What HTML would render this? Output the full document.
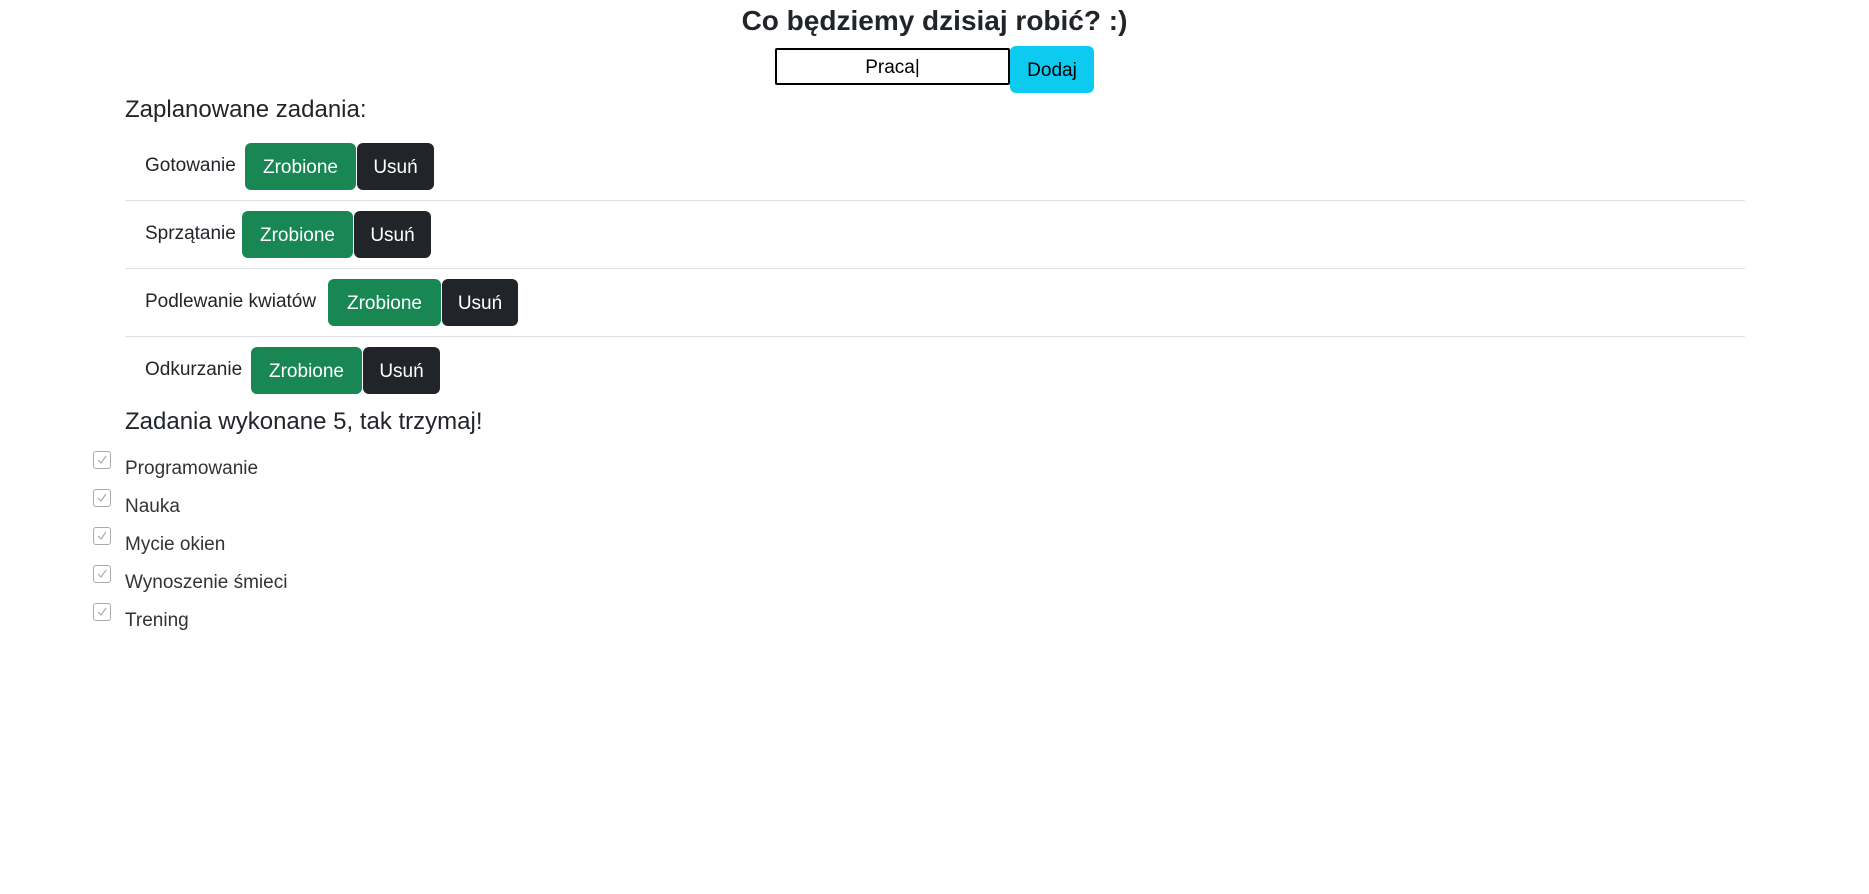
<!DOCTYPE html>
<html><head><meta charset="utf-8"><style>
body{margin:0;width:1869px;height:894px;background:#fff;font-family:"Liberation Sans",sans-serif;color:#212529;position:relative;overflow:hidden}
h1{position:absolute;left:0;width:1869px;text-align:center;top:3px;margin:0;font-size:28px;font-weight:bold;line-height:36px}
.in{position:absolute;left:775px;top:48px;width:231px;height:33px;border:2px solid #000;border-radius:2px;text-align:center;font-size:19px;line-height:35px;color:#000}
.dod{position:absolute;left:1010px;top:46px;width:84px;height:47px;background:#0dcaf0;border-radius:6px;font-size:19px;line-height:50px;text-align:center;color:#000}
h2{position:absolute;margin:0;font-size:24px;font-weight:normal;left:125px;line-height:30px}
.row{position:absolute;left:125px;width:1620px;height:68px;border-bottom:1px solid #dee2e6}
.row span{position:absolute;left:20px;top:23px;font-size:19px;line-height:22px}
.b{position:absolute;top:0;height:47px;line-height:49px;font-size:19px;color:#fff;text-align:center;border-radius:6px}
.g{background:#198754}.d{background:#212529}
.cb{position:absolute;left:93px;width:16px;height:16px;border:1.5px solid #aaa;border-radius:3px}
.cb svg{position:absolute;left:2px;top:2px}
.t{position:absolute;left:125px;font-size:19px;color:#333;line-height:22px}
</style></head><body>
<h1>Co będziemy dzisiaj robić? :)</h1>
<div class="in">Praca|</div>
<div class="dod">Dodaj</div>
<h2 style="top:95px">Zaplanowane zadania:</h2>
<div class="row" style="top:132px"><span>Gotowanie</span><div class="b g" style="left:120px;top:11px;width:111px">Zrobione</div><div class="b d" style="left:232px;top:11px;width:77px">Usuń</div></div>
<div class="row" style="top:200px"><span>Sprzątanie</span><div class="b g" style="left:117px;top:11px;width:111px">Zrobione</div><div class="b d" style="left:229px;top:11px;width:77px">Usuń</div></div>
<div class="row" style="top:268px"><span>Podlewanie kwiatów</span><div class="b g" style="left:203px;top:11px;width:113px">Zrobione</div><div class="b d" style="left:317px;top:11px;width:76px">Usuń</div></div>
<div class="row" style="top:336px;border:none"><span>Odkurzanie</span><div class="b g" style="left:126px;top:11px;width:111px">Zrobione</div><div class="b d" style="left:238px;top:11px;width:77px">Usuń</div></div>
<h2 style="top:407px">Zadania wykonane 5, tak trzymaj!</h2>
<div class="cb" style="top:451px"><svg width="12" height="12"><path d="M2 6l3 3 5-7" stroke="#aaa" fill="none" stroke-width="1.2"/></svg></div>
<div class="t" style="top:458px">Programowanie</div>
<div class="cb" style="top:489px"><svg width="12" height="12"><path d="M2 6l3 3 5-7" stroke="#aaa" fill="none" stroke-width="1.2"/></svg></div>
<div class="t" style="top:496px">Nauka</div>
<div class="cb" style="top:527px"><svg width="12" height="12"><path d="M2 6l3 3 5-7" stroke="#aaa" fill="none" stroke-width="1.2"/></svg></div>
<div class="t" style="top:534px">Mycie okien</div>
<div class="cb" style="top:565px"><svg width="12" height="12"><path d="M2 6l3 3 5-7" stroke="#aaa" fill="none" stroke-width="1.2"/></svg></div>
<div class="t" style="top:572px">Wynoszenie śmieci</div>
<div class="cb" style="top:603px"><svg width="12" height="12"><path d="M2 6l3 3 5-7" stroke="#aaa" fill="none" stroke-width="1.2"/></svg></div>
<div class="t" style="top:610px">Trening</div>
</body></html>
